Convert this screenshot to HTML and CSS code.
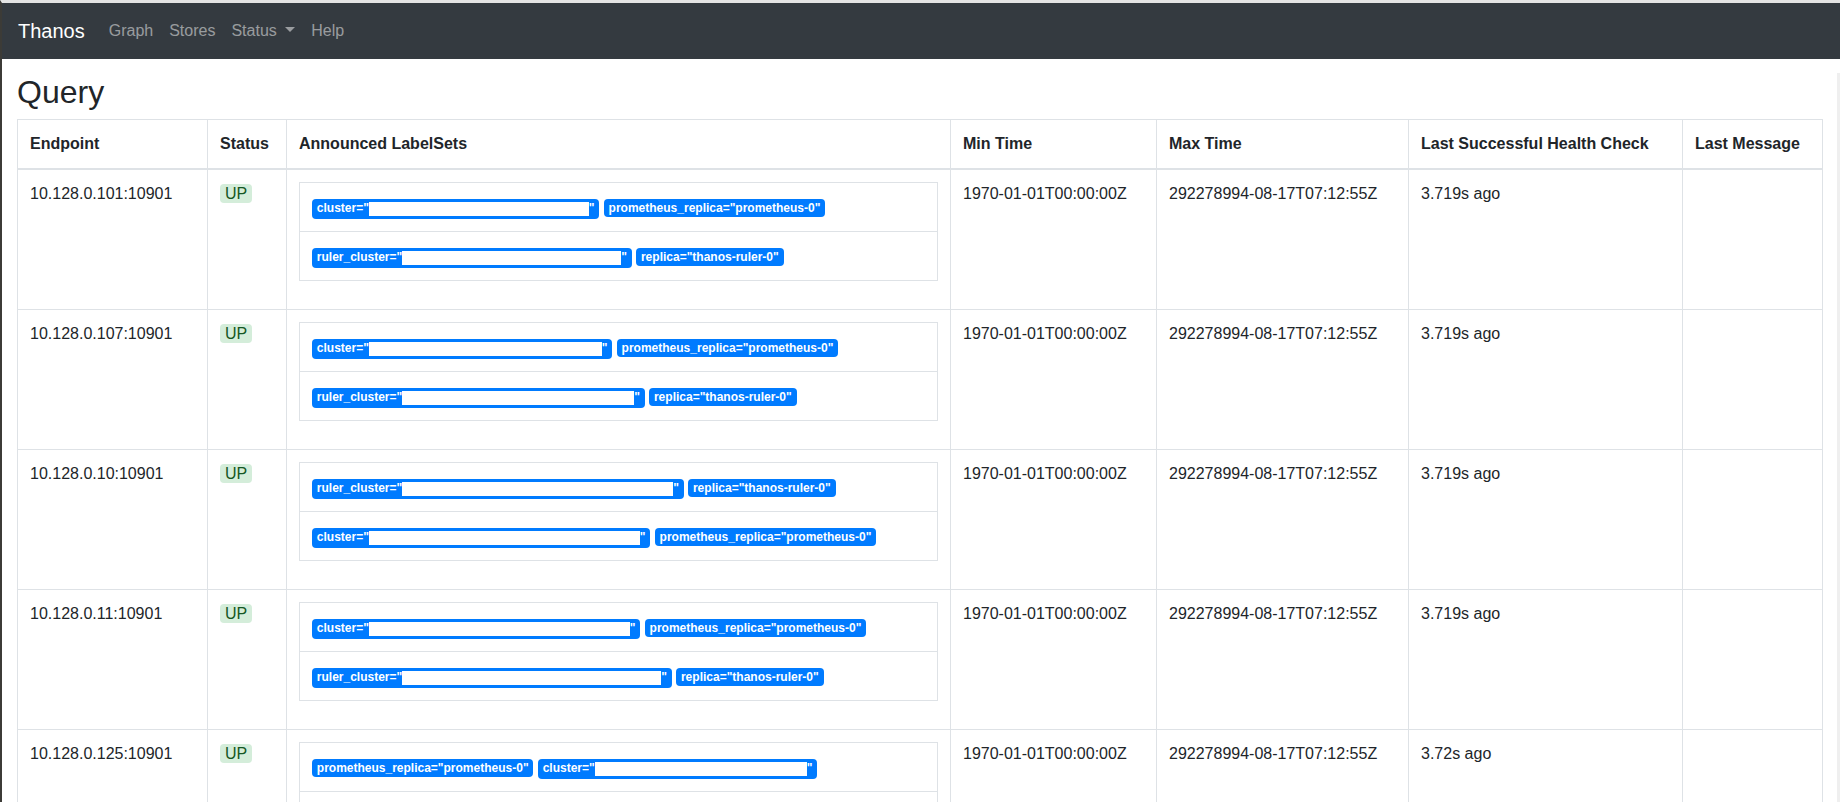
FILE: index.html
```html
<!DOCTYPE html>
<html lang="en">
<head>
  <meta charset="UTF-8" />
  <meta name="viewport" content="width=device-width, initial-scale=1" />
  <title>Thanos | Stores</title>
  <link rel="stylesheet" href="styles.css">
</head>
<body>

  <nav class="navbar">
    <a class="brand" href="#">Thanos</a>
    <a class="nav-link" href="#">Graph</a>
    <a class="nav-link" href="#">Stores</a>
    <a class="nav-link" href="#">Status <span class="caret"></span></a>
    <a class="nav-link" href="#">Help</a>
  </nav>

  <main class="container">
    <h2>Query</h2>

    <table class="table">
      <colgroup>
        <col class="c-endpoint">
        <col class="c-status">
        <col class="c-labels">
        <col class="c-min">
        <col class="c-max">
        <col class="c-health">
        <col class="c-msg">
      </colgroup>
      <thead>
        <tr>
          <th>Endpoint</th>
          <th>Status</th>
          <th>Announced LabelSets</th>
          <th>Min Time</th>
          <th>Max Time</th>
          <th>Last Successful Health Check</th>
          <th>Last Message</th>
        </tr>
      </thead>
      <tbody>
        <tr>
          <td>10.128.0.101:10901</td>
          <td><span class="health up">UP</span></td>
          <td>
            <table class="labels">
              <tr><td>
                <span class="badge">cluster="<span class="hide" style="width:220px"></span>"</span>
                <span class="badge">prometheus_replica="prometheus-0"</span>
              </td></tr>
              <tr><td>
                <span class="badge">ruler_cluster="<span class="hide" style="width:219px"></span>"</span>
                <span class="badge">replica="thanos-ruler-0"</span>
              </td></tr>
            </table>
          </td>
          <td>1970-01-01T00:00:00Z</td>
          <td>292278994-08-17T07:12:55Z</td>
          <td>3.719s ago</td>
          <td></td>
        </tr>
        <tr>
          <td>10.128.0.107:10901</td>
          <td><span class="health up">UP</span></td>
          <td>
            <table class="labels">
              <tr><td>
                <span class="badge">cluster="<span class="hide" style="width:233px"></span>"</span>
                <span class="badge">prometheus_replica="prometheus-0"</span>
              </td></tr>
              <tr><td>
                <span class="badge">ruler_cluster="<span class="hide" style="width:232px"></span>"</span>
                <span class="badge">replica="thanos-ruler-0"</span>
              </td></tr>
            </table>
          </td>
          <td>1970-01-01T00:00:00Z</td>
          <td>292278994-08-17T07:12:55Z</td>
          <td>3.719s ago</td>
          <td></td>
        </tr>
        <tr>
          <td>10.128.0.10:10901</td>
          <td><span class="health up">UP</span></td>
          <td>
            <table class="labels">
              <tr><td>
                <span class="badge">ruler_cluster="<span class="hide" style="width:271px"></span>"</span>
                <span class="badge">replica="thanos-ruler-0"</span>
              </td></tr>
              <tr><td>
                <span class="badge">cluster="<span class="hide" style="width:271px"></span>"</span>
                <span class="badge">prometheus_replica="prometheus-0"</span>
              </td></tr>
            </table>
          </td>
          <td>1970-01-01T00:00:00Z</td>
          <td>292278994-08-17T07:12:55Z</td>
          <td>3.719s ago</td>
          <td></td>
        </tr>
        <tr>
          <td>10.128.0.11:10901</td>
          <td><span class="health up">UP</span></td>
          <td>
            <table class="labels">
              <tr><td>
                <span class="badge">cluster="<span class="hide" style="width:261px"></span>"</span>
                <span class="badge">prometheus_replica="prometheus-0"</span>
              </td></tr>
              <tr><td>
                <span class="badge">ruler_cluster="<span class="hide" style="width:259px"></span>"</span>
                <span class="badge">replica="thanos-ruler-0"</span>
              </td></tr>
            </table>
          </td>
          <td>1970-01-01T00:00:00Z</td>
          <td>292278994-08-17T07:12:55Z</td>
          <td>3.719s ago</td>
          <td></td>
        </tr>
        <tr>
          <td>10.128.0.125:10901</td>
          <td><span class="health up">UP</span></td>
          <td>
            <table class="labels">
              <tr><td>
                <span class="badge">prometheus_replica="prometheus-0"</span>
                <span class="badge">cluster="<span class="hide" style="width:212px"></span>"</span>
              </td></tr>
              <tr><td>
                <span class="badge">ruler_cluster="<span class="hide" style="width:223px"></span>"</span>
                <span class="badge">replica="thanos-ruler-0"</span>
              </td></tr>
            </table>
          </td>
          <td>1970-01-01T00:00:00Z</td>
          <td>292278994-08-17T07:12:55Z</td>
          <td>3.72s ago</td>
          <td></td>
        </tr>
      </tbody>
    </table>
  </main>

</body>
</html>
```

FILE: styles.css
```css
body {
  margin: 0;
  font-family: 'Liberation Sans', Arial, sans-serif;
  font-size: 16px;
  line-height: 1.5;
  color: #212529;
  background: #fff;
  border-left: 2px solid #3c3b37;
  border-top: 3px solid #e4e4e4;
}

.navbar {
  background: #343a40;
  display: flex;
  align-items: center;
  padding: 8px 16px;
  margin-bottom: 14px;
}

.navbar a {
  text-decoration: none;
}

.brand {
  color: #fff;
  font-size: 20px;
  line-height: 30px;
  padding: 5px 0;
  margin-right: 16px;
}

.nav-link {
  color: rgba(255, 255, 255, 0.5);
  padding: 8px;
}

.caret {
  display: inline-block;
  margin-left: 4px;
  vertical-align: 4px;
  border-top: 5px solid rgba(255, 255, 255, 0.5);
  border-left: 5px solid transparent;
  border-right: 5px solid transparent;
}

.container {
  padding: 0 15px;
  border-right: 3px solid #efefef;
}

h2 {
  margin: 0 0 8px;
  font-size: 32px;
  font-weight: 500;
  line-height: 1.2;
}

.table {
  width: 100%;
  table-layout: fixed;
  border-collapse: collapse;
  margin-bottom: 16px;
}

.c-endpoint { width: 190px; }
.c-status { width: 79px; }
.c-labels { width: 664px; }
.c-min { width: 206px; }
.c-max { width: 252px; }
.c-health { width: 274px; }
.c-msg { width: 140px; }

.table th,
.table td {
  padding: 12px;
  border: 1px solid #dee2e6;
  vertical-align: top;
  text-align: left;
}

.table thead th {
  vertical-align: bottom;
  border-bottom: 2px solid #dee2e6;
  font-weight: bold;
}

.health {
  display: inline-block;
  padding: 2px 5px 1px;
  line-height: 1;
  border-radius: 4px;
}

.up {
  background: #d4edda;
  color: #155724;
}

.labels {
  width: 100%;
  border-collapse: collapse;
  margin-bottom: 16px;
}

.labels td {
  padding: 12px;
  border: 1px solid #dee2e6;
}

.badge {
  display: inline-block;
  padding: 3px 4.8px;
  font-size: 12px;
  font-weight: bold;
  line-height: 1;
  white-space: nowrap;
  color: #fff;
  background: #007bff;
  border-radius: 4px;
}

.hide {
  display: inline-block;
  height: 14px;
  vertical-align: -4px;
  background: #fff;
}
```
